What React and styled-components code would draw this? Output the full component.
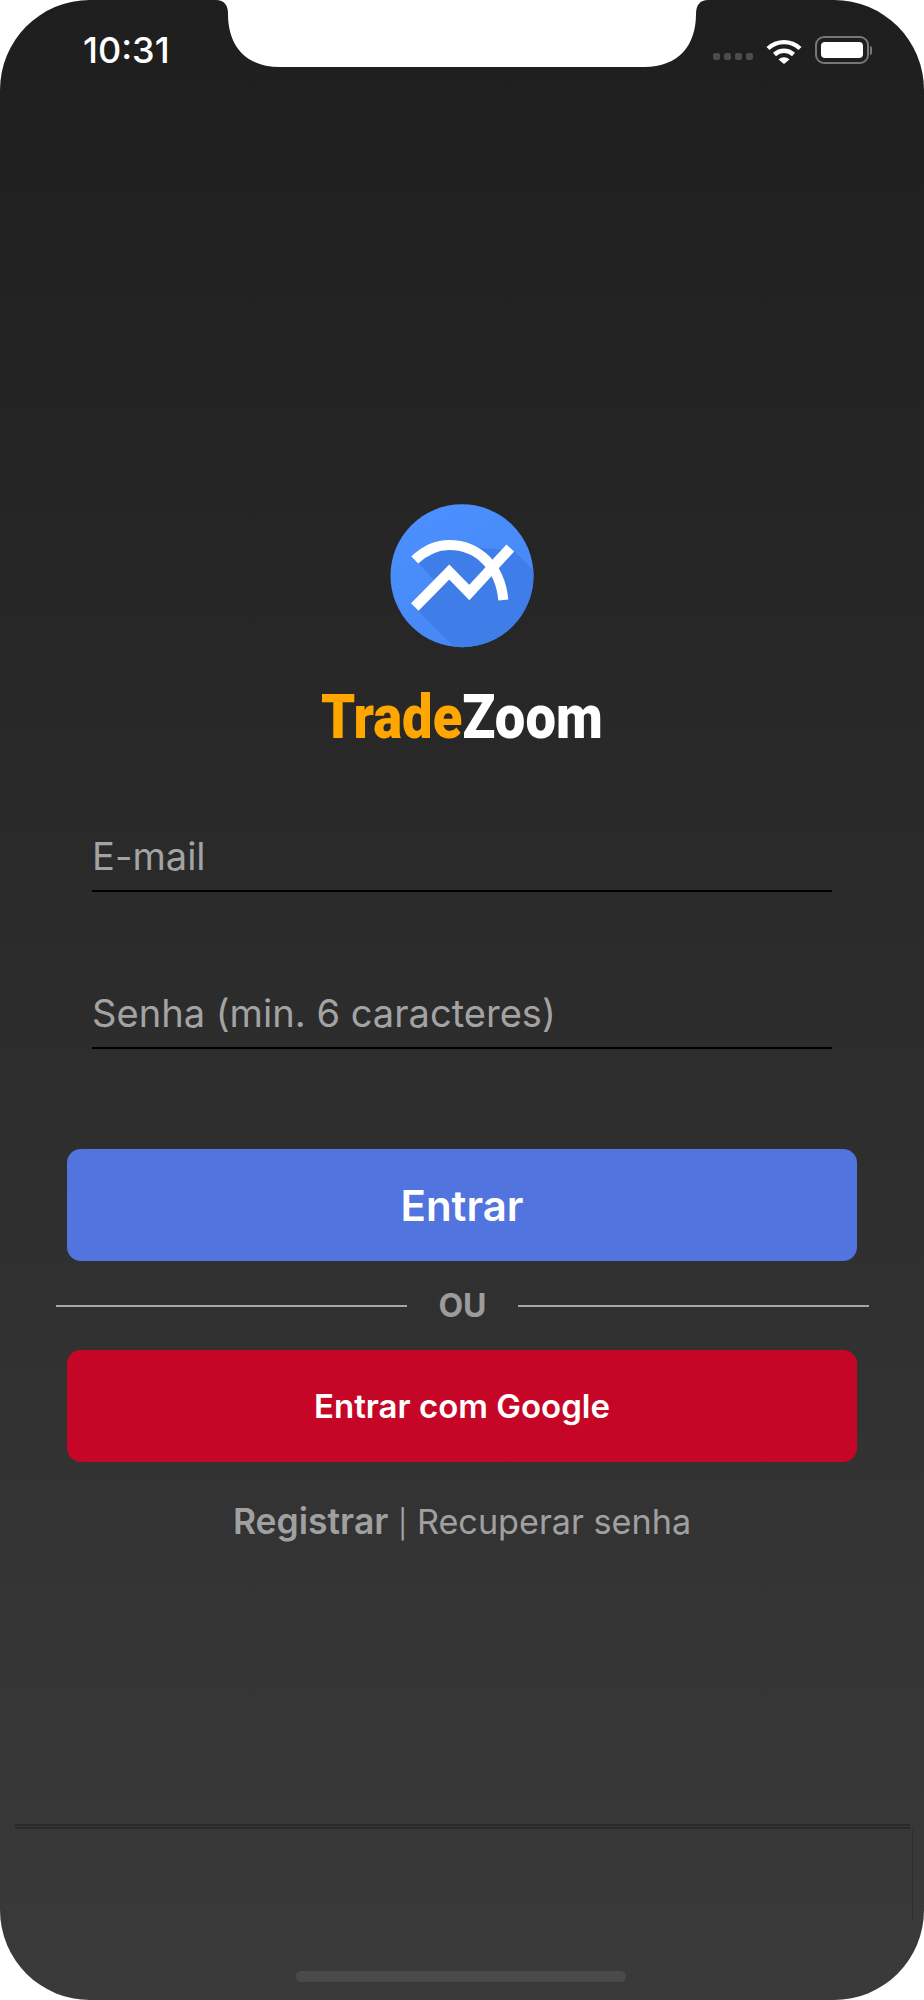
import React from 'react';
import styled, { createGlobalStyle } from 'styled-components';

const GlobalStyle = createGlobalStyle`
  html, body {
    margin: 0;
    padding: 0;
    background: #ffffff;
  }
  * { box-sizing: border-box; }
`;

const Screen = styled.div`
  position: relative;
  width: 924px;
  height: 2000px;
  display: flex;
  flex-direction: column;
  overflow: hidden;
  border-radius: 90px;
  background: linear-gradient(180deg, #1e1e1e 0%, #3a3a3a 100%);
  font-family: Inter, "Liberation Sans", sans-serif;
`;

const Notch = styled.svg`
  position: absolute;
  top: 0;
  left: 0;
`;

const StatusBar = styled.div`
  height: 100px;
  padding: 30px 52px 0 83px;
  display: flex;
  justify-content: space-between;
  align-items: flex-start;
`;

const Time = styled.span`
  font-size: 36px;
  line-height: 40px;
  font-weight: 500;
  color: #ffffff;
`;

const Indicators = styled.div`
  display: flex;
  align-items: center;
  height: 40px;
`;

const Dots = styled.div`
  display: flex;
  gap: 4px;
  margin: 13px 13px 0 0;
`;

const Dot = styled.i`
  width: 7px;
  height: 7px;
  border-radius: 2px;
  background: #4c4c4c;
`;

const Battery = styled.div`
  width: 54px;
  height: 28px;
  margin-left: 13px;
  padding: 4px;
  border: 2px solid #777777;
  border-radius: 9px;
`;

const BatteryFill = styled.div`
  height: 100%;
  border-radius: 4px;
  background: #ffffff;
`;

const BatteryCap = styled.div`
  width: 2px;
  height: 9px;
  margin-left: 1px;
  border-radius: 0 2px 2px 0;
  background: #777777;
`;

const Brand = styled.div`
  margin-top: 395px;
  display: flex;
  flex-direction: column;
  align-items: center;
`;

const Title = styled.h1`
  margin: 22px 0 0;
  height: 80px;
  font-family: Roboto, sans-serif;
  font-size: 62px;
  line-height: 80px;
  font-weight: 900;
  white-space: nowrap;
  color: #ffffff;
  transform: scaleX(0.876);
`;

const Accent = styled.span`
  color: #ffa600;
`;

const Form = styled.div`
  margin-top: 72px;
  padding: 0 92px;
  display: flex;
  flex-direction: column;
  gap: 94px;
`;

const Field = styled.div`
  height: 63px;
  padding-top: 2px;
  border-bottom: 2px solid #000000;
  font-size: 38.1px;
  line-height: 50px;
  color: #a3a3a3;
`;

const Actions = styled.div`
  margin-top: 100px;
  padding: 0 67px 0 67px;
  display: flex;
  flex-direction: column;
`;

const ActionButton = styled.button`
  height: 112px;
  border: 0;
  border-radius: 14px;
  padding: 0;
  font-family: inherit;
  font-weight: 600;
  font-size: ${(props) => props.$size}px;
  color: #ffffff;
  background: ${(props) => props.$color};
`;

const Divider = styled.div`
  height: 89px;
  margin: 0 -12px 0 -11px;
  display: flex;
  align-items: center;
  justify-content: space-between;
`;

const DividerLine = styled.div`
  width: 351px;
  height: 2px;
  background: #a6a6a6;
`;

const DividerText = styled.span`
  font-size: 32px;
  font-weight: 700;
  color: #9c9c9c;
`;

const Links = styled.div`
  margin-top: 37px;
  text-align: center;
  font-size: 34.2px;
  line-height: 46px;
  color: #a0a0a0;
`;

const Strong = styled.strong`
  font-size: 35.5px;
  font-weight: 600;
`;

const Pipe = styled.span`
  font-size: 28px;
`;

const BottomBar = styled.div`
  position: relative;
  margin: auto 14px 0 15px;
  height: 176px;
  border-top: 5px double #2a2a2a;
  display: flex;
  align-items: flex-end;
  justify-content: center;
  padding-bottom: 18px;

  &::after {
    content: '';
    position: absolute;
    top: 0;
    right: -3px;
    width: 1px;
    height: 92px;
    background: #2f2f2f;
  }
`;

const HomeIndicator = styled.div`
  width: 330px;
  height: 11px;
  margin-right: 4px;
  border-radius: 6px;
  background: #4a4a4a;
`;

const WifiIcon = () => (
  <svg width="36" height="27" viewBox="0 0 36 27" fill="none">
    <path d="M2 11.5C11 3 25 3 34 11.5" stroke="#fff" strokeWidth="4.4" />
    <path d="M8.5 17.5C14 12.5 22 12.5 27.5 17.5" stroke="#fff" strokeWidth="4.4" />
    <path d="M12.5 22.5C16 19.5 20 19.5 23.5 22.5L18 27Z" fill="#fff" />
  </svg>
);

const Logo = () => (
  <svg width="160" height="160" viewBox="1.7 0 160 160">
    <defs>
      <linearGradient id="logoFill" x1="0.2" y1="0" x2="0.7" y2="1">
        <stop offset="0" stopColor="#4b90ff" />
        <stop offset="1" stopColor="#4587f3" />
      </linearGradient>
      <clipPath id="logoClip">
        <circle cx="81.7" cy="80.7" r="71.5" />
      </clipPath>
    </defs>
    <circle cx="81.7" cy="80.7" r="71.5" fill="url(#logoFill)" />
    <path
      d="M38 68L69 50L134 56L176 98V176H98L38 116L38 108L57 88Z"
      fill="#3f7ee8"
      clipPath="url(#logoClip)"
    />
    <path d="M34.5 65C46 54 58 50 69 50C98 50 120 72 123 105" stroke="#fff" strokeWidth="10" fill="none" />
    <path d="M34.5 112L69 77L89 97.5L130 53" stroke="#fff" strokeWidth="10.5" fill="none" />
  </svg>
);

const App = () => (
  <>
    <GlobalStyle />
    <Screen>
      <StatusBar>
        <Time>10:31</Time>
        <Indicators>
          <Dots>
            <Dot />
            <Dot />
            <Dot />
            <Dot />
          </Dots>
          <WifiIcon />
          <Battery>
            <BatteryFill />
          </Battery>
          <BatteryCap />
        </Indicators>
      </StatusBar>

      <Brand>
        <Logo />
        <Title>
          <Accent>Trade</Accent>Zoom
        </Title>
      </Brand>

      <Form>
        <Field>E-mail</Field>
        <Field>Senha (min. 6 caracteres)</Field>
      </Form>

      <Actions>
        <ActionButton $color="#5274de" $size={42}>Entrar</ActionButton>
        <Divider>
          <DividerLine />
          <DividerText>OU</DividerText>
          <DividerLine />
        </Divider>
        <ActionButton $color="#c60626" $size={33}>Entrar com Google</ActionButton>
      </Actions>

      <Links>
        <Strong>Registrar</Strong> <Pipe>|</Pipe> Recuperar senha
      </Links>

      <BottomBar>
        <HomeIndicator />
      </BottomBar>

      <Notch width="924" height="70" viewBox="0 0 924 70">
        <path
          d="M216 0C224 0 228 5 228 14C228 45 245 67 280 67L644 67C679 67 696 45 696 14C696 5 700 0 708 0Z"
          fill="#ffffff"
        />
      </Notch>
    </Screen>
  </>
);

export default App;
